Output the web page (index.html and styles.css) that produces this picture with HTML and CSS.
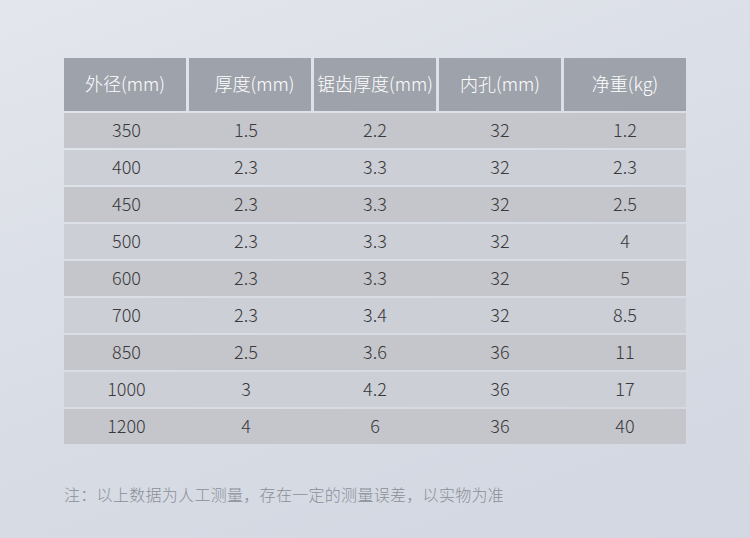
FILE: index.html
```html
<!DOCTYPE html>
<html lang="zh-CN">
<head>
<meta charset="utf-8">
<link rel="stylesheet" href="styles.css">
</head>
<body>
<div class="page">
  <div class="table">
    <div class="head">
      <div class="hc">外径(mm)</div>
      <div class="hc shift">厚度(mm)</div>
      <div class="hc">锯齿厚度(mm)</div>
      <div class="hc">内孔(mm)</div>
      <div class="hc">净重(kg)</div>
    </div>
    <div class="row odd"><div>350</div><div>1.5</div><div>2.2</div><div>32</div><div>1.2</div></div>
    <div class="row even"><div>400</div><div>2.3</div><div>3.3</div><div>32</div><div>2.3</div></div>
    <div class="row odd"><div>450</div><div>2.3</div><div>3.3</div><div>32</div><div>2.5</div></div>
    <div class="row even"><div>500</div><div>2.3</div><div>3.3</div><div>32</div><div>4</div></div>
    <div class="row odd"><div>600</div><div>2.3</div><div>3.3</div><div>32</div><div>5</div></div>
    <div class="row even"><div>700</div><div>2.3</div><div>3.4</div><div>32</div><div>8.5</div></div>
    <div class="row odd"><div>850</div><div>2.5</div><div>3.6</div><div>36</div><div>11</div></div>
    <div class="row even"><div>1000</div><div>3</div><div>4.2</div><div>36</div><div>17</div></div>
    <div class="row odd"><div>1200</div><div>4</div><div>6</div><div>36</div><div>40</div></div>
  </div>
  <p class="note">注：以上数据为人工测量，存在一定的测量误差，以实物为准</p>
</div>
</body>
</html>
```
FILE: styles.css
```css
html, body {
  margin: 0;
  padding: 0;
}
body {
  width: 750px;
  height: 538px;
  overflow: hidden;
  background: linear-gradient(160deg, #e3e6ec 0%, #d8dce5 55%, #d2d7e1 100%);
  font-family: "Noto Sans CJK SC", "Noto Sans", sans-serif;
  font-weight: 300;
}
.page {
  padding: 58px 0 0 64px;
}
.table {
  width: 622px;
  display: flex;
  flex-direction: column;
  gap: 2px;
}
.head, .row {
  display: grid;
  grid-template-columns: 122px 122px 122px 122px 122px;
  column-gap: 3px;
}
.head {
  height: 53px;
}
.hc {
  background: #9ea2ab;
  color: #ffffff;
  font-size: 18px;
  display: flex;
  align-items: center;
  justify-content: center;
  white-space: nowrap;
  padding-bottom: 4px;
}
.hc.shift {
  padding-left: 9px;
}
.row {
  height: 35px;
  color: #3a3a3c;
  font-size: 18px;
}
.row div {
  display: flex;
  align-items: center;
  justify-content: center;
  padding-bottom: 3px;
}
.row div:nth-child(2) {
  padding-right: 8px;
}
.row div:nth-child(1) {
  padding-left: 3px;
}
.odd {
  background: #c5c6cb;
}
.even {
  background: #cccfd6;
}
.note {
  margin: 38px 0 0 0;
  font-size: 16px;
  letter-spacing: 0.3px;
  color: #8b8f98;
  line-height: 24px;
}
```
